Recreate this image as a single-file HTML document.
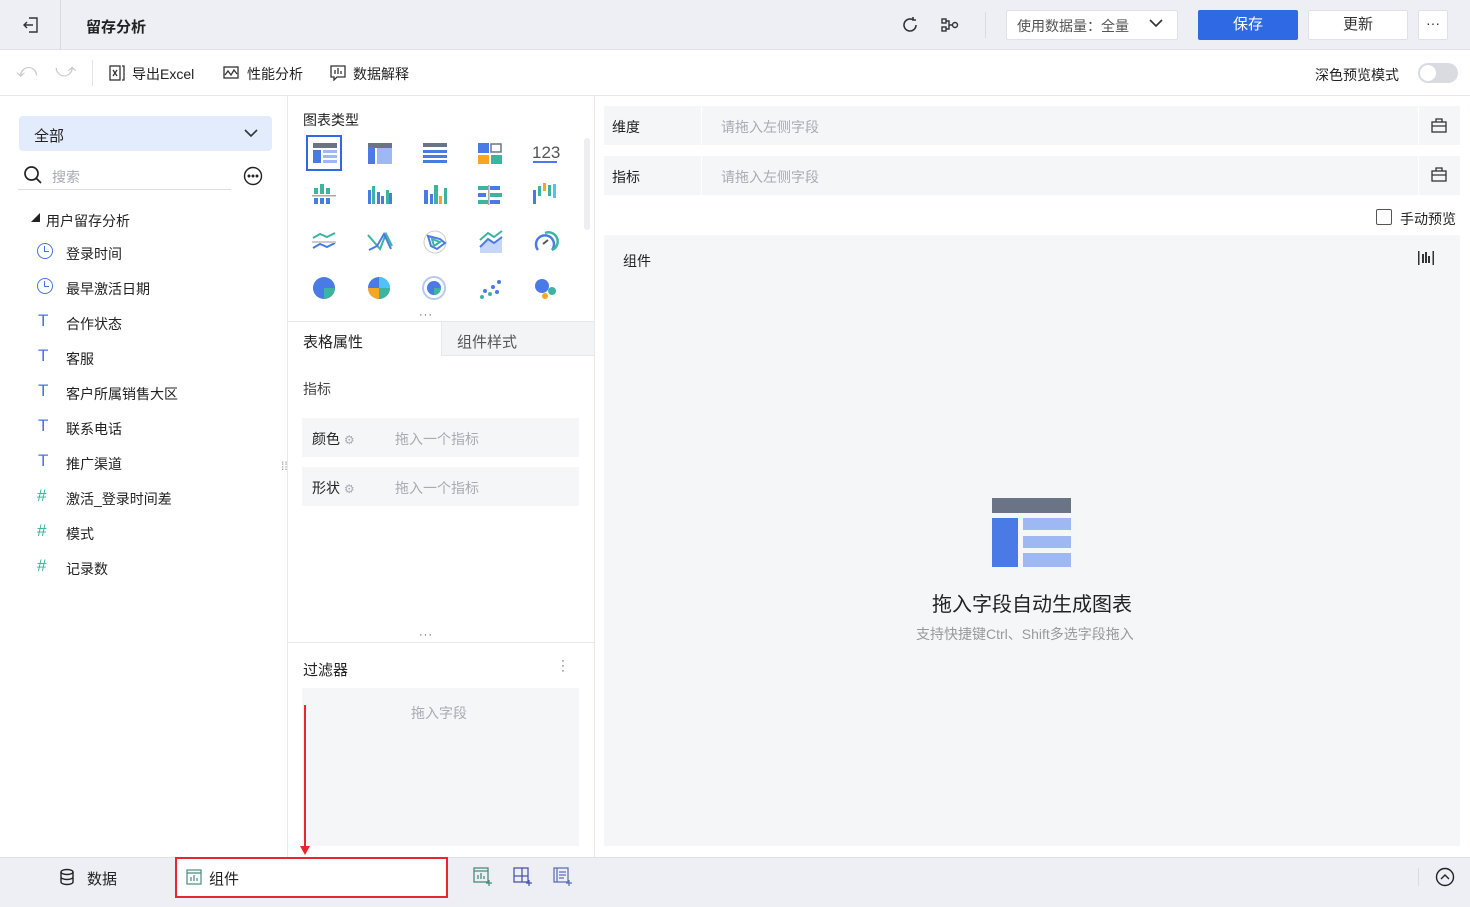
<!DOCTYPE html>
<html><head><meta charset="utf-8"><style>
*{box-sizing:border-box;margin:0;padding:0}
body{width:1470px;height:907px;overflow:hidden;background:#fff;font-family:"Liberation Sans","Noto Sans CJK SC",sans-serif;font-size:14px;color:#222;position:relative}
.a{position:absolute}
.t{white-space:nowrap}
.gray{color:#a8abb3}
</style></head><body>
<!-- top bar -->
<div class="a" style="left:0;top:0;width:1470px;height:50px;background:#edeff4;border-bottom:1px solid #e2e4ea"></div>
<div class="a" style="left:60px;top:0;width:1px;height:50px;background:#d8dbe2"></div>
<svg class="a" style="left:22px;top:16px" width="18" height="18" viewBox="0 0 18 18" fill="none" stroke="#333" stroke-width="1.4"><path d="M7 2h8v14H7M2 9h9M5 6L2 9l3 3"/></svg>
<div class="a t" style="left:86px;top:16px;font-weight:bold;font-size:15px">留存分析</div>
<svg class="a" style="left:900px;top:15px" width="20" height="20" viewBox="0 0 20 20" fill="none" stroke="#333" stroke-width="1.6"><path d="M16 10a6 6 0 1 1-3-5.2M13 2v3h3"/></svg>
<svg class="a" style="left:940px;top:15px" width="20" height="20" viewBox="0 0 20 20" fill="none" stroke="#333" stroke-width="1.4"><rect x="2" y="4" width="4" height="4"/><rect x="2" y="12" width="4" height="4"/><circle cx="15" cy="10" r="2.5"/><path d="M6 6h3v8H6M9 10h3.5"/></svg>
<div class="a" style="left:985px;top:12px;width:1px;height:26px;background:#d8dbe2"></div>
<div class="a" style="left:1006px;top:10px;width:172px;height:30px;background:#fff;border:1px solid #dfe1e6;border-radius:2px"></div>
<div class="a t" style="left:1017px;top:16px;color:#555">使用数据量：全量</div>
<svg class="a" style="left:1149px;top:18px" width="14" height="10" viewBox="0 0 14 10" fill="none" stroke="#333" stroke-width="1.6"><path d="M1 2l6 6 6-6"/></svg>
<div class="a" style="left:1198px;top:10px;width:100px;height:30px;background:#2f6ae4;border-radius:2px;color:#fff;text-align:center;line-height:30px;font-size:15px">保存</div>
<div class="a" style="left:1308px;top:10px;width:100px;height:30px;background:#fff;border:1px solid #dfe1e6;border-radius:2px;text-align:center;line-height:28px;font-size:15px;color:#333">更新</div>
<div class="a" style="left:1418px;top:10px;width:30px;height:30px;background:#fff;border:1px solid #dfe1e6;border-radius:2px;text-align:center;line-height:24px;color:#333">···</div>
<!-- toolbar -->
<div class="a" style="left:0;top:95px;width:1470px;height:1px;background:#e6e8ec"></div>
<div class="a t" style="left:16px;top:60px;color:#c8cad0;font-size:20px">⤺</div>
<div class="a t" style="left:55px;top:60px;color:#c8cad0;font-size:20px">⤻</div>
<div class="a" style="left:92px;top:60px;width:1px;height:26px;background:#e2e4e8"></div>
<svg class="a" style="left:109px;top:65px" width="16" height="16" viewBox="0 0 16 16" fill="none" stroke="#333" stroke-width="1.3"><rect x="1" y="1" width="10" height="14"/><path d="M13 1h2v14h-2M4 5l4 6M8 5l-4 6"/></svg>
<div class="a t" style="left:132px;top:64px">导出Excel</div>
<svg class="a" style="left:223px;top:65px" width="16" height="16" viewBox="0 0 16 16" fill="none" stroke="#333" stroke-width="1.3"><rect x="1" y="2" width="14" height="11"/><path d="M2 10l3-4 3 4 3-5 3 4"/></svg>
<div class="a t" style="left:247px;top:64px">性能分析</div>
<svg class="a" style="left:330px;top:65px" width="16" height="16" viewBox="0 0 16 16" fill="none" stroke="#333" stroke-width="1.3"><path d="M1 1h14v11H7l-3 3v-3H1zM5 5v4M8 3v6M11 6v3"/></svg>
<div class="a t" style="left:353px;top:64px">数据解释</div>
<div class="a t" style="left:1315px;top:65px">深色预览模式</div>
<div class="a" style="left:1418px;top:63px;width:40px;height:20px;border-radius:10px;background:#d9dbe0"></div>
<div class="a" style="left:1420px;top:65px;width:16px;height:16px;border-radius:50%;background:#fff"></div>
<!-- left panel -->
<div class="a" style="left:287px;top:96px;width:1px;height:761px;background:#e6e8ec"></div>
<div class="a" style="left:19px;top:116px;width:253px;height:35px;background:#e3ecfc;border-radius:4px"></div>
<div class="a t" style="left:34px;top:125px;font-size:15px">全部</div>
<svg class="a" style="left:244px;top:128px" width="14" height="10" viewBox="0 0 14 10" fill="none" stroke="#333" stroke-width="1.6"><path d="M1 2l6 6 6-6"/></svg>
<svg class="a" style="left:23px;top:165px" width="20" height="20" viewBox="0 0 20 20" fill="none" stroke="#222" stroke-width="1.7"><circle cx="8.5" cy="8.5" r="6.5"/><path d="M13 13l5 5"/></svg>
<div class="a t gray" style="left:52px;top:167px">搜索</div>
<div class="a" style="left:18px;top:189px;width:213px;height:1px;background:#dcdee2"></div>
<svg class="a" style="left:243px;top:166px" width="20" height="20" viewBox="0 0 20 20" fill="none" stroke="#222" stroke-width="1.4"><circle cx="10" cy="10" r="8.5"/><circle cx="6" cy="10" r=".8" fill="#222"/><circle cx="10" cy="10" r=".8" fill="#222"/><circle cx="14" cy="10" r=".8" fill="#222"/></svg>
<div class="a t" style="left:31px;top:211px;font-size:9px">◢</div>
<div class="a t" style="left:46px;top:211px">用户留存分析</div>
<div class="a" style="left:37px;top:243px;width:16px;height:16px;border:1.5px solid #4a73e0;border-radius:50%"></div>
<div class="a" style="left:44px;top:246px;width:5px;height:6px;border-left:1.5px solid #4a73e0;border-bottom:1.5px solid #4a73e0"></div>
<div class="a t" style="left:66px;top:244px">登录时间</div>
<div class="a" style="left:37px;top:278px;width:16px;height:16px;border:1.5px solid #4a73e0;border-radius:50%"></div>
<div class="a" style="left:44px;top:281px;width:5px;height:6px;border-left:1.5px solid #4a73e0;border-bottom:1.5px solid #4a73e0"></div>
<div class="a t" style="left:66px;top:279px">最早激活日期</div>
<div class="a t" style="left:38px;top:311px;color:#4a73e0;font-size:17px">T</div><div class="a t" style="left:66px;top:314px">合作状态</div>
<div class="a t" style="left:38px;top:346px;color:#4a73e0;font-size:17px">T</div><div class="a t" style="left:66px;top:349px">客服</div>
<div class="a t" style="left:38px;top:381px;color:#4a73e0;font-size:17px">T</div><div class="a t" style="left:66px;top:384px">客户所属销售大区</div>
<div class="a t" style="left:38px;top:416px;color:#4a73e0;font-size:17px">T</div><div class="a t" style="left:66px;top:419px">联系电话</div>
<div class="a t" style="left:38px;top:451px;color:#4a73e0;font-size:17px">T</div><div class="a t" style="left:66px;top:454px">推广渠道</div>
<div class="a t" style="left:37px;top:486px;color:#2fb39a;font-size:17px">#</div><div class="a t" style="left:66px;top:489px">激活_登录时间差</div>
<div class="a t" style="left:37px;top:521px;color:#2fb39a;font-size:17px">#</div><div class="a t" style="left:66px;top:524px">模式</div>
<div class="a t" style="left:37px;top:556px;color:#2fb39a;font-size:17px">#</div><div class="a t" style="left:66px;top:559px">记录数</div>
<div class="a t" style="left:281px;top:462px;color:#999;font-size:12px;line-height:9px">⁞⁞</div>
<!-- middle panel -->
<div class="a" style="left:594px;top:96px;width:1px;height:761px;background:#e6e8ec"></div>
<div class="a t" style="left:303px;top:110px;font-size:14px">图表类型</div>
<div class="a" style="left:584px;top:138px;width:6px;height:92px;border-radius:3px;background:#eceef1"></div>
<svg class="a" style="left:300px;top:130px" width="280" height="180" viewBox="0 0 280 180">
<rect x="7" y="6" width="34" height="34" fill="none" stroke="#2f6ae4" stroke-width="2"/>
<rect x="13" y="13" width="24" height="5" fill="#6b7486"/><rect x="13" y="20" width="8" height="13" fill="#4a7ae6"/><rect x="23" y="20" width="14" height="3" fill="#9db8f2"/><rect x="23" y="25" width="14" height="3" fill="#9db8f2"/><rect x="23" y="30" width="14" height="3" fill="#9db8f2"/>
<rect x="68" y="13" width="24" height="5" fill="#6b7486"/><rect x="68" y="13" width="7" height="21" fill="#4a7ae6"/><rect x="77" y="18" width="15" height="16" fill="#9db8f2"/><rect x="68" y="13" width="7" height="4" fill="#6b7486"/>
<rect x="123" y="13" width="24" height="4" fill="#6b7486"/><rect x="123" y="20" width="24" height="3" fill="#4a7ae6"/><rect x="123" y="25" width="24" height="3" fill="#4a7ae6"/><rect x="123" y="30" width="24" height="3" fill="#4a7ae6"/>
<rect x="178" y="13" width="11" height="10" fill="#4a7ae6"/><rect x="191" y="14" width="10" height="8" fill="none" stroke="#6b7486" stroke-width="1.5"/><rect x="178" y="25" width="11" height="9" fill="#f5a623"/><rect x="191" y="25" width="11" height="9" fill="#3cb4a0"/>
<text x="232" y="28" font-family="Liberation Sans" font-size="17" fill="#555">123</text><rect x="233" y="31" width="24" height="2" fill="#4a7ae6"/>
<g transform="translate(0,46)"><rect x="14" y="12" width="4" height="6" fill="#3cb4a0"/><rect x="20" y="8" width="4" height="10" fill="#3cb4a0"/><rect x="26" y="12" width="4" height="6" fill="#3cb4a0"/><rect x="12" y="19" width="24" height="1.5" fill="#aaa"/><rect x="14" y="22" width="4" height="6" fill="#4a7ae6"/><rect x="20" y="22" width="4" height="6" fill="#4a7ae6"/><rect x="26" y="22" width="4" height="6" fill="#4a7ae6"/>
<rect x="68" y="14" width="3" height="14" fill="#4a7ae6"/><rect x="72" y="10" width="3" height="18" fill="#3cb4a0"/><rect x="77" y="16" width="3" height="12" fill="#4a7ae6"/><rect x="81" y="20" width="3" height="8" fill="#4a7ae6"/><rect x="86" y="14" width="3" height="14" fill="#3cb4a0"/><rect x="89" y="17" width="3" height="11" fill="#4a7ae6"/>
<rect x="124" y="14" width="4" height="14" fill="#4a7ae6"/><rect x="130" y="18" width="3" height="10" fill="#4a7ae6"/><rect x="134" y="9" width="4" height="19" fill="#3cb4a0"/><rect x="139" y="20" width="3" height="8" fill="#f5a623"/><rect x="144" y="12" width="3" height="16" fill="#3cb4a0"/>
<rect x="178" y="10" width="10" height="4" fill="#3cb4a0"/><rect x="190" y="10" width="10" height="4" fill="#4a7ae6"/><rect x="178" y="17" width="8" height="4" fill="#4a7ae6"/><rect x="190" y="17" width="12" height="4" fill="#3cb4a0"/><rect x="178" y="24" width="10" height="4" fill="#3cb4a0"/><rect x="190" y="24" width="10" height="4" fill="#4a7ae6"/><rect x="188" y="9" width="1.5" height="20" fill="#aaa"/>
<rect x="233" y="14" width="3" height="14" fill="#4a7ae6"/><rect x="238" y="10" width="3" height="10" fill="#3cb4a0"/><rect x="243" y="7" width="3" height="8" fill="#f5a623"/><rect x="248" y="9" width="3" height="11" fill="#3cb4a0"/><rect x="253" y="8" width="3" height="14" fill="#4fc3f7"/></g>
<g transform="translate(0,92)" fill="none" stroke-width="2"><path d="M13 16l7-4 7 3 8-4" stroke="#3cb4a0"/><path d="M13 26l7-4 7 3 8-4" stroke="#4a7ae6"/><path d="M12 20h24" stroke="#ccc"/>
<path d="M68 13l12 14 6-15 6 12" stroke="#3cb4a0"/><path d="M69 28l8-4 7-12 7 15" stroke="#4a7ae6"/>
<circle cx="135" cy="20" r="11" stroke="#ccc" stroke-width="1"/><path d="M128 14l12 3 5 4-8 6-6-3z" stroke="#4a7ae6"/><path d="M132 17l8 3-6 4z" stroke="#3cb4a0"/>
<path d="M180 25l8-8 6 4 8-6v16h-22z" fill="#c6d6f8" stroke="none"/><path d="M180 18l8-7 6 4 8-6" stroke="#3cb4a0"/><path d="M180 25l8-8 6 4 8-6" stroke="#4a7ae6"/>
<path d="M238 28a9 9 0 1 1 14 0" stroke="#4a7ae6" stroke-width="2.5"/><path d="M245 11a9 9 0 0 1 7 17" stroke="#3cb4a0" stroke-width="2.5"/><path d="M243 22l5-4" stroke="#555"/></g>
<g transform="translate(0,138)"><circle cx="24" cy="20" r="11" fill="#4a7ae6"/><path d="M24 20h11a11 11 0 0 1-11 11z" fill="#3cb4a0"/>
<circle cx="79" cy="20" r="11" fill="#4a7ae6"/><path d="M79 20h11a11 11 0 0 1-11 11z" fill="#3cb4a0"/><path d="M79 20v11a11 11 0 0 1-11-11z" fill="#f5a623"/><path d="M79 20V9a11 11 0 0 1 11 11z" fill="#4fc3f7"/>
<circle cx="134" cy="20" r="11" fill="none" stroke="#b8c8f2" stroke-width="2"/><circle cx="134" cy="20" r="7" fill="#4a7ae6"/><path d="M134 20h7a7 7 0 0 1-7 7z" fill="#3cb4a0"/>
<circle cx="182" cy="29" r="2" fill="#3cb4a0"/><circle cx="185" cy="23" r="2" fill="#4a7ae6"/><circle cx="190" cy="26" r="2" fill="#3cb4a0"/><circle cx="193" cy="19" r="2" fill="#4a7ae6"/><circle cx="197" cy="24" r="2" fill="#4a7ae6"/><circle cx="199" cy="14" r="2" fill="#4a7ae6"/>
<circle cx="242" cy="18" r="7" fill="#4a7ae6"/><circle cx="252" cy="23" r="4" fill="#3cb4a0"/><circle cx="245" cy="28" r="3" fill="#f5a623"/></g>
</svg>
<div class="a t" style="left:419px;top:309px;color:#555;font-size:11px;letter-spacing:1px">···</div>
<div class="a" style="left:288px;top:321px;width:306px;height:1px;background:#e6e8ec"></div>
<div class="a" style="left:441px;top:322px;width:153px;height:34px;background:#f3f4f6;border-left:1px solid #e6e8ec;border-bottom:1px solid #e6e8ec"></div>
<div class="a t" style="left:303px;top:331px;font-size:15px">表格属性</div>
<div class="a t" style="left:457px;top:331px;font-size:15px;color:#555">组件样式</div>
<div class="a t" style="left:303px;top:379px;color:#444">指标</div>
<div class="a" style="left:302px;top:418px;width:277px;height:39px;background:#f5f6f8"></div>
<div class="a t" style="left:312px;top:429px">颜色 <span class="gray" style="font-size:12px">⚙</span></div>
<div class="a t gray" style="left:395px;top:429px">拖入一个指标</div>
<div class="a" style="left:302px;top:467px;width:277px;height:39px;background:#f5f6f8"></div>
<div class="a t" style="left:312px;top:478px">形状 <span class="gray" style="font-size:12px">⚙</span></div>
<div class="a t gray" style="left:395px;top:478px">拖入一个指标</div>
<div class="a" style="left:288px;top:642px;width:306px;height:1px;background:#e6e8ec"></div>
<div class="a t" style="left:419px;top:629px;color:#555;font-size:11px;letter-spacing:1px">···</div>
<div class="a t" style="left:303px;top:659px;font-size:15px">过滤器</div>
<div class="a t" style="left:561px;top:658px;color:#555;font-size:12px;line-height:5px">·<br>·<br>·</div>
<div class="a" style="left:302px;top:688px;width:277px;height:158px;background:#f5f6f8"></div>
<div class="a t gray" style="left:411px;top:703px">拖入字段</div>
<div class="a" style="left:304px;top:705px;width:2px;height:145px;background:#e8262c"></div>
<div class="a" style="left:300px;top:846px;width:0;height:0;border-left:5px solid transparent;border-right:5px solid transparent;border-top:9px solid #e8262c"></div>
<!-- right panel -->
<div class="a" style="left:604px;top:106px;width:856px;height:39px;background:#f5f6f8"></div>
<div class="a" style="left:701px;top:106px;width:1px;height:39px;background:#fff"></div>
<div class="a" style="left:1418px;top:106px;width:1px;height:39px;background:#fff"></div>
<div class="a t" style="left:612px;top:117px">维度</div><div class="a t gray" style="left:721px;top:117px">请拖入左侧字段</div>
<div class="a" style="left:604px;top:156px;width:856px;height:39px;background:#f5f6f8"></div>
<div class="a" style="left:701px;top:156px;width:1px;height:39px;background:#fff"></div>
<div class="a" style="left:1418px;top:156px;width:1px;height:39px;background:#fff"></div>
<div class="a t" style="left:612px;top:167px">指标</div><div class="a t gray" style="left:721px;top:167px">请拖入左侧字段</div>
<svg class="a" style="left:1431px;top:117px" width="16" height="16" viewBox="0 0 16 16" fill="none" stroke="#333" stroke-width="1.3"><rect x="1" y="5" width="14" height="10"/><path d="M5 5V2h6v3M1 9h14"/></svg>
<svg class="a" style="left:1431px;top:166px" width="16" height="16" viewBox="0 0 16 16" fill="none" stroke="#333" stroke-width="1.3"><rect x="1" y="5" width="14" height="10"/><path d="M5 5V2h6v3M1 9h14"/></svg>
<div class="a" style="left:1376px;top:209px;width:16px;height:16px;border:1.5px solid #555;border-radius:2px"></div>
<div class="a t" style="left:1400px;top:209px">手动预览</div>
<div class="a" style="left:604px;top:235px;width:856px;height:611px;background:#f5f6f8"></div>
<div class="a t" style="left:623px;top:251px">组件</div>
<svg class="a" style="left:1417px;top:250px" width="18" height="16" viewBox="0 0 18 16" fill="#333"><rect x="1" y="1" width="1.5" height="14"/><rect x="15.5" y="1" width="1.5" height="14"/><rect x="5" y="4" width="2" height="9"/><rect x="8" y="2" width="2" height="11"/><rect x="11" y="6" width="2" height="7"/></svg>
<svg class="a" style="left:992px;top:498px" width="80" height="70" viewBox="0 0 80 70"><rect x="0" y="0" width="79" height="15" fill="#6b7486"/><rect x="0" y="20" width="26" height="49" fill="#4a7ae6"/><rect x="31" y="20" width="48" height="12" fill="#9db8f2"/><rect x="31" y="38" width="48" height="12" fill="#9db8f2"/><rect x="31" y="55" width="48" height="14" fill="#9db8f2"/></svg>
<div class="a t" style="left:932px;top:588px;font-size:20px;color:#222">拖入字段自动生成图表</div>
<div class="a t" style="left:916px;top:624px;color:#999">支持快捷键Ctrl、Shift多选字段拖入</div>
<!-- bottom bar -->
<div class="a" style="left:0;top:857px;width:1470px;height:50px;background:#edeff4;border-top:1px solid #dfe1e6"></div>
<svg class="a" style="left:59px;top:868px" width="16" height="18" viewBox="0 0 16 18" fill="none" stroke="#222" stroke-width="1.4"><ellipse cx="8" cy="4" rx="6" ry="2.5"/><path d="M2 4v10c0 1.4 2.7 2.5 6 2.5s6-1.1 6-2.5V4M2 9c0 1.4 2.7 2.5 6 2.5s6-1.1 6-2.5"/></svg>
<div class="a t" style="left:87px;top:868px;font-size:15px">数据</div>
<div class="a" style="left:175px;top:857px;width:273px;height:41px;background:#fff;border:2px solid #e8262c"></div>
<svg class="a" style="left:186px;top:869px" width="16" height="16" viewBox="0 0 16 16" fill="none" stroke="#4a8b7c" stroke-width="1.2"><rect x="1" y="1" width="14" height="14"/><path d="M1 4h14M5 12V8M8 12V6M11 12V9"/></svg>
<div class="a t" style="left:209px;top:868px;font-size:15px">组件</div>
<svg class="a" style="left:473px;top:867px" width="20" height="20" viewBox="0 0 20 20" fill="none" stroke="#4a8b7c" stroke-width="1.3"><rect x="1" y="1" width="14" height="14"/><path d="M1 4h14M5 12V8M8 12V6M11 12V9M16 13v6M13 16h6"/></svg>
<svg class="a" style="left:513px;top:867px" width="20" height="20" viewBox="0 0 20 20" fill="none" stroke="#4b55b0" stroke-width="1.3"><rect x="1" y="1" width="14" height="14"/><path d="M9 1v14M1 9h14M16 13v6M13 16h6"/></svg>
<svg class="a" style="left:553px;top:867px" width="20" height="20" viewBox="0 0 20 20" fill="none" stroke="#5b72b8" stroke-width="1.3"><rect x="1" y="1" width="14" height="14"/><path d="M4 1v14M6 5h7M6 8h7M6 11h5M16 13v6M13 16h6"/></svg>
<div class="a" style="left:1418px;top:868px;width:1px;height:18px;background:#d8dbe2"></div>
<svg class="a" style="left:1435px;top:867px" width="20" height="20" viewBox="0 0 20 20" fill="none" stroke="#222" stroke-width="1.4"><circle cx="10" cy="10" r="8.5"/><path d="M6 12l4-4 4 4"/></svg>
</body></html>
